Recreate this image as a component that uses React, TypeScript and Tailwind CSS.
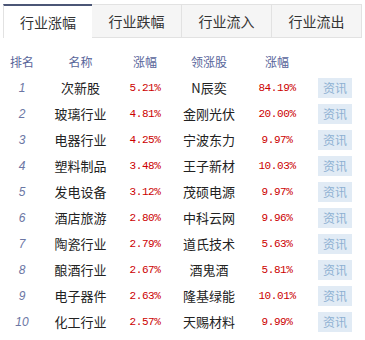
const tabs = ['行业涨幅', '行业跌幅', '行业流入', '行业流出']

type Row = {
  rank: number
  name: string
  pct: string
  leader: string
  leaderPct: string
}

const rows: Array<Row> = [
  { rank: 1, name: '次新股', pct: '5.21%', leader: 'N辰奕', leaderPct: '84.19%' },
  { rank: 2, name: '玻璃行业', pct: '4.81%', leader: '金刚光伏', leaderPct: '20.00%' },
  { rank: 3, name: '电器行业', pct: '4.25%', leader: '宁波东力', leaderPct: '9.97%' },
  { rank: 4, name: '塑料制品', pct: '3.48%', leader: '王子新材', leaderPct: '10.03%' },
  { rank: 5, name: '发电设备', pct: '3.12%', leader: '茂硕电源', leaderPct: '9.97%' },
  { rank: 6, name: '酒店旅游', pct: '2.80%', leader: '中科云网', leaderPct: '9.96%' },
  { rank: 7, name: '陶瓷行业', pct: '2.79%', leader: '道氏技术', leaderPct: '5.63%' },
  { rank: 8, name: '酿酒行业', pct: '2.67%', leader: '酒鬼酒', leaderPct: '5.81%' },
  { rank: 9, name: '电子器件', pct: '2.63%', leader: '隆基绿能', leaderPct: '10.01%' },
  { rank: 10, name: '化工行业', pct: '2.57%', leader: '天赐材料', leaderPct: '9.99%' },
]

const App = () => {
  return (
    <div className="w-[365px] h-[340px] bg-white font-['Noto_Sans_CJK_SC',sans-serif]">
      <div className="flex pt-[4px] pl-[3px]">
        {tabs.map((tab, i) =>
          i === 0 ? (
            <div
              key={tab}
              className="w-[89px] h-[34px] flex items-center justify-center bg-white border-t-2 border-t-[#4b5676] border-l border-l-[#e2e2e2] text-[14px] text-[#333]"
            >
              {tab}
            </div>
          ) : (
            <div
              key={tab}
              className="w-[90px] h-[34px] flex items-center justify-center bg-[#f5f5f5] border-t border-r border-b border-[#e2e2e2] text-[14px] text-[#333]"
            >
              {tab}
            </div>
          )
        )}
      </div>
      <div className="mt-[11px]">
        <div className="grid grid-cols-[44px_73px_56px_72px_64px_52px] h-[26px] items-center text-center text-[12px] text-[#58659a]">
          <div>排名</div>
          <div>名称</div>
          <div>涨幅</div>
          <div>领涨股</div>
          <div>涨幅</div>
          <div></div>
        </div>
        {rows.map((row) => (
          <div
            key={row.rank}
            className="grid grid-cols-[44px_73px_56px_72px_64px_52px] h-[26px] items-center text-center"
          >
            <div className="font-['Liberation_Sans',sans-serif] italic text-[12px] text-[#6b76a4]">
              {row.rank}
            </div>
            <div className="text-[13px] text-[#222]">{row.name}</div>
            <div className="font-['Liberation_Mono',monospace] text-[11px] tracking-[-0.4px] text-[#cc0000]">
              {row.pct}
            </div>
            <div className="text-[13px] text-[#222]">{row.leader}</div>
            <div className="font-['Liberation_Mono',monospace] text-[11px] tracking-[-0.4px] text-[#cc0000]">
              {row.leaderPct}
            </div>
            <div className="flex justify-center">
              <span className="w-[34px] h-[20px] bg-[#e1ebf5] text-[#8db0d2] text-[12px] leading-[20px]">
                资讯
              </span>
            </div>
          </div>
        ))}
      </div>
    </div>
  )
}

export default App
